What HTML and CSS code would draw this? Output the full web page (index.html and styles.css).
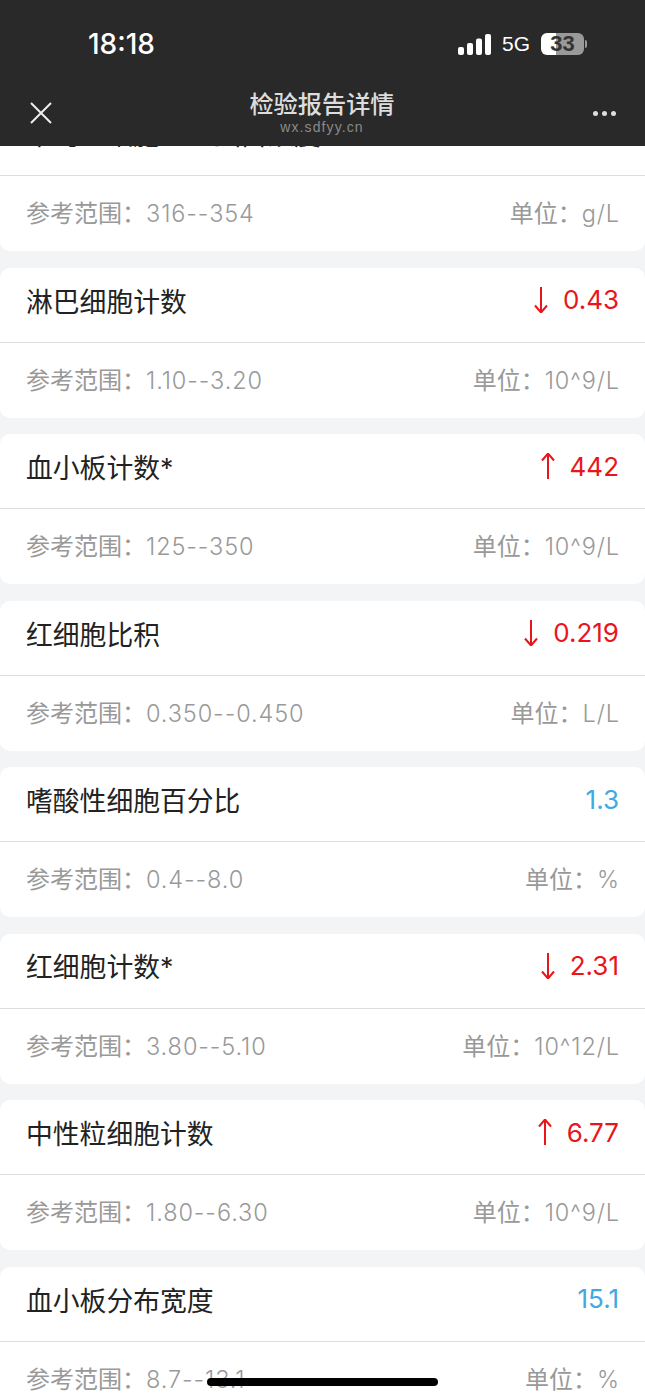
FILE: index.html
```html
<!DOCTYPE html>
<html lang="zh-CN">
<head>
    <meta charset="UTF-8">
    <meta name="viewport" content="width=device-width, initial-scale=1.0">
    <title>检验报告详情</title>
    <link rel="stylesheet" href="styles.css">
</head>
<body>
    <header class="topbar">
        <div class="status">
            <span class="time">18:18</span>
            <div class="status-right">
                <svg class="signal" width="34" height="21" viewBox="0 0 34 21">
                    <rect x="0" y="13" width="6" height="8" rx="2"></rect>
                    <rect x="9" y="9" width="6" height="12" rx="2"></rect>
                    <rect x="18" y="4.5" width="6" height="16.5" rx="2"></rect>
                    <rect x="27" y="0" width="6" height="21" rx="2"></rect>
                </svg>
                <span class="net">5G</span>
                <div class="battery"><span class="battery-level">33</span></div>
                <span class="battery-tip"></span>
            </div>
        </div>
        <div class="navbar">
            <svg class="close" width="22" height="22" viewBox="0 0 22 22">
                <path d="M1 1 L21 21 M21 1 L1 21"></path>
            </svg>
            <div class="nav-title">
                <div class="nav-name">检验报告详情</div>
                <div class="nav-host">wx.sdfyy.cn</div>
            </div>
            <div class="more"><i></i><i></i><i></i></div>
        </div>
    </header>

    <main class="list">
        <section class="card">
            <div class="card-top"><span class="name">平均红细胞血红蛋白浓度</span></div>
            <div class="card-bottom">
                <span>参考范围<span class="colon">：</span><span class="num">316--354</span></span>
                <span>单位<span class="colon">：</span><span class="num">g/L</span></span>
            </div>
        </section>
        <section class="card">
            <div class="card-top"><span class="name">淋巴细胞计数</span>
                <span class="value low"><svg class="arrow" width="14" height="26" viewBox="0 0 14 26"><path d="M7 0 V25 M1 18.5 L7 25.5 L13 18.5"></path></svg>0.43</span></div>
            <div class="card-bottom">
                <span>参考范围<span class="colon">：</span><span class="num">1.10--3.20</span></span>
                <span>单位<span class="colon">：</span><span class="num">10^9/L</span></span>
            </div>
        </section>
        <section class="card">
            <div class="card-top"><span class="name">血小板计数<span class="num-name">*</span></span>
                <span class="value low"><svg class="arrow" width="14" height="26" viewBox="0 0 14 26"><path d="M7 26 V1 M1 7.5 L7 0.5 L13 7.5"></path></svg>442</span></div>
            <div class="card-bottom">
                <span>参考范围<span class="colon">：</span><span class="num">125--350</span></span>
                <span>单位<span class="colon">：</span><span class="num">10^9/L</span></span>
            </div>
        </section>
        <section class="card">
            <div class="card-top"><span class="name">红细胞比积</span>
                <span class="value low"><svg class="arrow" width="14" height="26" viewBox="0 0 14 26"><path d="M7 0 V25 M1 18.5 L7 25.5 L13 18.5"></path></svg>0.219</span></div>
            <div class="card-bottom">
                <span>参考范围<span class="colon">：</span><span class="num">0.350--0.450</span></span>
                <span>单位<span class="colon">：</span><span class="num">L/L</span></span>
            </div>
        </section>
        <section class="card">
            <div class="card-top"><span class="name">嗜酸性细胞百分比</span>
                <span class="value normal">1.3</span></div>
            <div class="card-bottom">
                <span>参考范围<span class="colon">：</span><span class="num">0.4--8.0</span></span>
                <span>单位<span class="colon">：</span><span class="num">%</span></span>
            </div>
        </section>
        <section class="card">
            <div class="card-top"><span class="name">红细胞计数<span class="num-name">*</span></span>
                <span class="value low"><svg class="arrow" width="14" height="26" viewBox="0 0 14 26"><path d="M7 0 V25 M1 18.5 L7 25.5 L13 18.5"></path></svg>2.31</span></div>
            <div class="card-bottom">
                <span>参考范围<span class="colon">：</span><span class="num">3.80--5.10</span></span>
                <span>单位<span class="colon">：</span><span class="num">10^12/L</span></span>
            </div>
        </section>
        <section class="card">
            <div class="card-top"><span class="name">中性粒细胞计数</span>
                <span class="value low"><svg class="arrow" width="14" height="26" viewBox="0 0 14 26"><path d="M7 26 V1 M1 7.5 L7 0.5 L13 7.5"></path></svg>6.77</span></div>
            <div class="card-bottom">
                <span>参考范围<span class="colon">：</span><span class="num">1.80--6.30</span></span>
                <span>单位<span class="colon">：</span><span class="num">10^9/L</span></span>
            </div>
        </section>
        <section class="card">
            <div class="card-top"><span class="name">血小板分布宽度</span>
                <span class="value normal">15.1</span></div>
            <div class="card-bottom">
                <span>参考范围<span class="colon">：</span><span class="num">8.7--13.1</span></span>
                <span>单位<span class="colon">：</span><span class="num">%</span></span>
            </div>
        </section>
    </main>

    <div class="home-bar"></div>
</body>
</html>
```

FILE: styles.css
```css
html, body {
    margin: 0;
    height: 1398px;
    overflow: hidden;
}

body {
    position: relative;
    background: #f3f4f6;
    font-family: "Noto Sans CJK SC", sans-serif;
}

/* dark bar sits over the scrolled list */
.topbar {
    position: absolute;
    top: 0;
    left: 0;
    right: 0;
    height: 146px;
    background: #292929;
    color: #fff;
    z-index: 2;
}

.status {
    display: flex;
    justify-content: space-between;
    align-items: center;
    height: 44px;
    padding: 22px 58px 0 88px;
}

.time {
    font-family: Inter, sans-serif;
    font-size: 28px;
    font-weight: 500;
    line-height: 44px;
}

.status-right {
    display: flex;
    align-items: center;
}

.signal {
    fill: #fff;
    margin-right: 10px;
}

.net {
    font-family: "Liberation Sans", sans-serif;
    font-size: 21px;
    margin-right: 11px;
}

.battery {
    width: 43px;
    height: 22px;
    border-radius: 6px;
    background: linear-gradient(to right, #fff 0, #fff 35%, #999 35%, #999 100%);
    color: #333;
    font-family: "Liberation Sans", sans-serif;
    font-size: 22px;
    font-weight: bold;
    line-height: 22px;
    text-align: center;
}

.battery-tip {
    width: 2px;
    height: 8px;
    margin-left: 1px;
    background: #999;
    border-radius: 0 2px 2px 0;
}

.navbar {
    display: flex;
    justify-content: space-between;
    align-items: center;
    padding: 22px 29px 0 30px;
}

.close {
    fill: none;
    stroke: #eee;
    stroke-width: 2;
    margin-top: 2px;
}

.nav-title {
    text-align: center;
    margin-left: -1px;
}

.nav-name {
    font-size: 24.2px;
    font-weight: 500;
    line-height: 30px;
    color: #ddd;
}

.nav-host {
    font-family: "Liberation Sans", sans-serif;
    font-size: 14px;
    line-height: 18px;
    letter-spacing: 1.1px;
    color: #8a8a8a;
}

.more {
    display: flex;
    gap: 4px;
    margin-top: 2px;
}

.more i {
    width: 5px;
    height: 5px;
    border-radius: 50%;
    background: #ddd;
}

.list {
    display: flex;
    flex-direction: column;
    gap: 16.5px;
    padding-top: 101px;
}

.card {
    background: #fff;
    border-radius: 10px;
}

.card-top {
    display: flex;
    justify-content: space-between;
    align-items: center;
    height: 74px;
    padding: 0 26px;
    border-bottom: 1px solid #ddd;
}

.card-bottom {
    display: flex;
    justify-content: space-between;
    height: 75px;
    padding: 18px 25px 0 26px;
    box-sizing: border-box;
    font-size: 24px;
    line-height: 36px;
    color: #999;
}

.colon {
    font-family: "Noto Sans CJK TC", sans-serif;
}

.num {
    font-family: Inter, sans-serif;
    font-size: 23.5px;
    font-weight: 300;
    letter-spacing: 0.9px;
}

.name {
    font-size: 26.8px;
    line-height: 36px;
    color: #222;
    margin-top: -8px;
}

.num-name {
    font-family: Inter, sans-serif;
}

.value {
    display: flex;
    align-items: center;
    gap: 15px;
    font-family: Inter, sans-serif;
    font-size: 26px;
    margin-top: -10px;
}

.low {
    color: #e8161b;
}

.normal {
    color: #3fa9e0;
}

.arrow {
    fill: none;
    stroke: #e8161b;
    stroke-width: 2;
}

.home-bar {
    position: absolute;
    left: 207px;
    top: 1378px;
    width: 231px;
    height: 8px;
    border-radius: 4px;
    background: #000;
}
```
